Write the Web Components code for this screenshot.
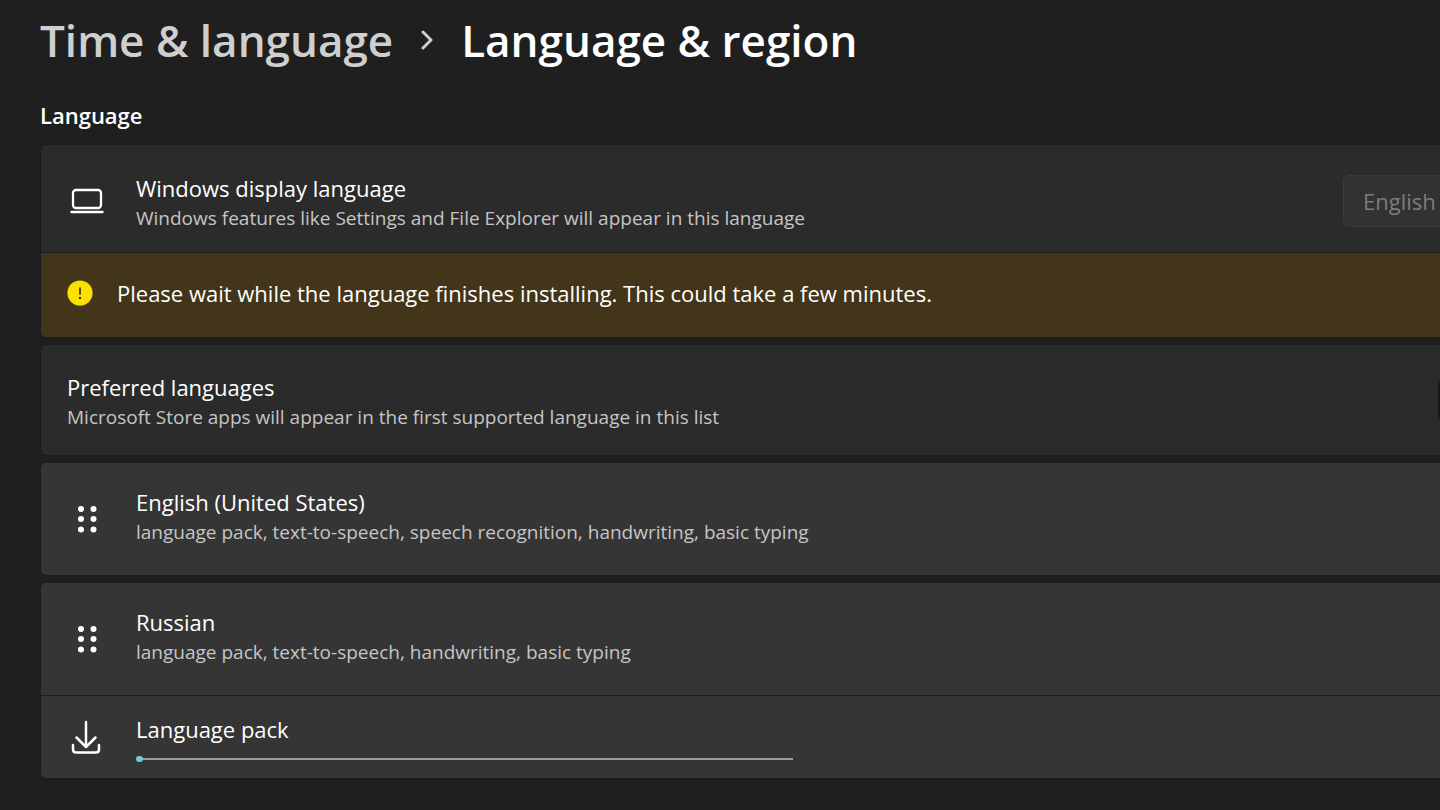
<!DOCTYPE html>
<html lang="en">
<head>
<meta charset="utf-8">
<meta name="viewport" content="width=device-width, initial-scale=1">
<title>Language &amp; region</title>
<style>
  body {
    margin: 0;
    background: #1f1f1f;
    color: #fff;
    font-family: "Open Sans", "Noto Sans", sans-serif;
    overflow: hidden;
  }
</style>
</head>
<body>

<settings-page>
  <settings-breadcrumb slot="header" parent="Time &amp; language" current="Language &amp; region"></settings-breadcrumb>

  <settings-group heading="Language">
    <settings-card>
      <settings-row compact heading="Windows display language" description="Windows features like Settings and File Explorer will appear in this language">
        <settings-icon slot="icon" name="laptop"></settings-icon>
        <language-select slot="action" label="Windows display language" value="English"></language-select>
      </settings-row>
      <info-bar>Please wait while the language finishes installing. This could take a few minutes.</info-bar>
    </settings-card>

    <settings-card>
      <settings-row heading="Preferred languages" description="Microsoft Store apps will appear in the first supported language in this list">
        <add-button slot="action" label="Add a language"></add-button>
      </settings-row>
    </settings-card>

    <settings-card raised>
      <settings-row tall heading="English (United States)" description="language pack, text-to-speech, speech recognition, handwriting, basic typing">
        <settings-icon slot="icon" name="grip"></settings-icon>
      </settings-row>
    </settings-card>

    <settings-card raised>
      <settings-row tall heading="Russian" description="language pack, text-to-speech, handwriting, basic typing">
        <settings-icon slot="icon" name="grip"></settings-icon>
      </settings-row>
      <download-row value="1">Language pack</download-row>
    </settings-card>
  </settings-group>
</settings-page>

<script>
const icons = {
  laptop: `
    <rect x="4" y="7" width="28" height="18" rx="3" fill="none" stroke="currentColor" stroke-width="2.3"/>
    <path d="M2.4 29H33.6" stroke="currentColor" stroke-width="2.3" stroke-linecap="round"/>`,
  grip: `
    <g fill="currentColor">
      <circle cx="12" cy="8" r="3"/><circle cx="24.5" cy="8" r="3"/>
      <circle cx="12" cy="18" r="3"/><circle cx="24.5" cy="18" r="3"/>
      <circle cx="12" cy="28.5" r="3"/><circle cx="24.5" cy="28.5" r="3"/>
    </g>`,
  download: `
    <path d="M17 3V28M7.5 18.5L17 28L26.5 18.5M4 26V30.5Q4 33.5 7 33.5H27Q30 33.5 30 30.5V26" fill="none"
      stroke="currentColor" stroke-width="2.5" stroke-linecap="round" stroke-linejoin="round"/>`
};

// Attach an open shadow root holding the given markup
function render(element, html) {
  const template = document.createElement('template');
  template.innerHTML = html;
  element.attachShadow({ mode: 'open' }).appendChild(template.content.cloneNode(true));
}

class SettingsIcon extends HTMLElement {
  connectedCallback() {
    render(this, `
      <style>
        :host { display: block; width: 36px; height: 36px; }
        svg { display: block; }
      </style>
      <svg width="36" height="36" viewBox="0 0 36 36" aria-hidden="true">${icons[this.getAttribute('name')]}</svg>
    `);
  }
}

class SettingsPage extends HTMLElement {
  connectedCallback() {
    render(this, `
      <style>
        /* The content column is wider than the window and runs off its right side */
        :host { display: block; overflow: hidden; min-height: 100vh; }
        main { padding: 8px 0 24px 40px; margin-right: -88px; }
      </style>
      <main>
        <slot name="header"></slot>
        <slot></slot>
      </main>
    `);
  }
}

class SettingsBreadcrumb extends HTMLElement {
  connectedCallback() {
    render(this, `
      <style>
        :host { display: block; }
        nav { display: flex; align-items: center; gap: 27px; font-size: 44px; line-height: 64px; font-weight: 600; }
        a { color: #cfcfcf; text-decoration: none; }
        h1 { margin: 0; font: inherit; }
        svg { display: block; }
      </style>
      <nav aria-label="Breadcrumb">
        <a href="#"></a>
        <svg width="14" height="20" viewBox="0 0 14 20" aria-hidden="true">
          <path d="M3 2L11 10L3 18" fill="none" stroke="#cfcfcf" stroke-width="3" stroke-linecap="round" stroke-linejoin="round"/>
        </svg>
        <h1></h1>
      </nav>
    `);
    this.shadowRoot.querySelector('a').textContent = this.getAttribute('parent');
    this.shadowRoot.querySelector('h1').textContent = this.getAttribute('current');
  }
}

class SettingsGroup extends HTMLElement {
  connectedCallback() {
    render(this, `
      <style>
        :host { display: block; margin-top: 28px; }
        h2 { margin: 0 0 14px; font-size: 22px; line-height: 30px; font-weight: 600; }
        .cards { display: flex; flex-direction: column; gap: 6px; }
      </style>
      <h2>${this.getAttribute('heading')}</h2>
      <div class="cards"><slot></slot></div>
    `);
  }
}

class SettingsCard extends HTMLElement {
  connectedCallback() {
    render(this, `
      <style>
        :host {
          display: flex;
          flex-direction: column;
          gap: 1px;
          border: 1px solid #1c1c1c;
          border-radius: 6px;
          overflow: hidden;
          background: #1f1f1f;
          --card: #2b2b2b;
        }
        :host([raised]) { --card: #353535; }
      </style>
      <slot></slot>
    `);
  }
}

class SettingsRow extends HTMLElement {
  connectedCallback() {
    render(this, `
      <style>
        :host {
          display: flex;
          align-items: center;
          min-height: 110px;
          box-sizing: border-box;
          padding: 0 24px 0 26px;
          background: var(--card);
        }
        :host([compact]) { min-height: 107px; padding-top: 4px; }
        :host([tall]) { min-height: 112px; }
        slot[name="icon"]::slotted(*) { margin: 0 31px 0 2px; }
        .text { flex: 1; min-width: 0; padding-top: 4px; }
        :host([tall]) .text { padding: 0 0 4px; }
        h3, p { margin: 0; font-weight: 400; line-height: 30px; }
        h3 { font-size: 22px; }
        p { font-size: 19px; color: #c5c5c5; }
      </style>
      <slot name="icon"></slot>
      <div class="text">
        <h3>${this.getAttribute('heading')}</h3>
        <p>${this.getAttribute('description')}</p>
      </div>
      <slot name="action"></slot>
    `);
  }
}

class LanguageSelect extends HTMLElement {
  connectedCallback() {
    render(this, `
      <style>
        :host { display: block; }
        select {
          display: block;
          appearance: none;
          width: 160px;
          height: 52px;
          padding: 0 19px;
          border: 1px solid #3a3a3a;
          border-radius: 6px;
          background: #323232;
          color: #7c7c7c;
          font: inherit;
          font-size: 22px;
          opacity: 1;
        }
      </style>
      <select aria-label="${this.getAttribute('label')}" disabled>
        <option>${this.getAttribute('value')}</option>
      </select>
    `);
  }
}

class AddButton extends HTMLElement {
  connectedCallback() {
    render(this, `
      <style>
        :host { display: block; }
        button { display: block; width: 65px; height: 44px; border: 0; border-radius: 6px; background: #191919; }
      </style>
      <button type="button" aria-label="${this.getAttribute('label')}"></button>
    `);
  }
}

class InfoBar extends HTMLElement {
  connectedCallback() {
    render(this, `
      <style>
        :host {
          display: flex;
          align-items: center;
          gap: 24px;
          min-height: 84px;
          box-sizing: border-box;
          padding: 0 26px 4px;
          background: #433519;
          font-size: 22px;
          line-height: 30px;
        }
        svg { display: block; flex: none; }
      </style>
      <svg width="26" height="26" viewBox="0 0 26 26" aria-hidden="true">
        <circle cx="13" cy="13" r="12.6" fill="#fce100"/>
        <path d="M13 8V14" stroke="#433519" stroke-width="1.7" stroke-linecap="round"/>
        <circle cx="13" cy="18" r="1.2" fill="#433519"/>
      </svg>
      <span role="status"><slot></slot></span>
    `);
  }
}

class DownloadRow extends HTMLElement {
  connectedCallback() {
    render(this, `
      <style>
        :host {
          display: flex;
          align-items: center;
          min-height: 82px;
          box-sizing: border-box;
          padding: 0 24px 0 26px;
          background: var(--card);
        }
        settings-icon { margin: 0 31px 0 2px; }
        .text { flex: 1; max-width: 657px; padding-top: 2px; }
        label { display: block; font-size: 22px; line-height: 30px; margin-bottom: 12px; }
        progress {
          display: block;
          appearance: none;
          width: 100%;
          height: 6px;
          border: 0;
          background: none;
        }
        progress::-webkit-progress-bar {
          background: linear-gradient(#9b9b9b, #9b9b9b) center / 100% 2px no-repeat;
        }
        progress::-webkit-progress-value { background: #70cdc8; border-radius: 3px; }
      </style>
      <settings-icon name="download"></settings-icon>
      <div class="text">
        <label for="progress"><slot></slot></label>
        <progress id="progress" max="100" value="${this.getAttribute('value')}"></progress>
      </div>
    `);
  }
}

customElements.define('settings-icon', SettingsIcon);
customElements.define('settings-page', SettingsPage);
customElements.define('settings-breadcrumb', SettingsBreadcrumb);
customElements.define('settings-group', SettingsGroup);
customElements.define('settings-card', SettingsCard);
customElements.define('settings-row', SettingsRow);
customElements.define('language-select', LanguageSelect);
customElements.define('add-button', AddButton);
customElements.define('info-bar', InfoBar);
customElements.define('download-row', DownloadRow);
</script>
</body>
</html>
